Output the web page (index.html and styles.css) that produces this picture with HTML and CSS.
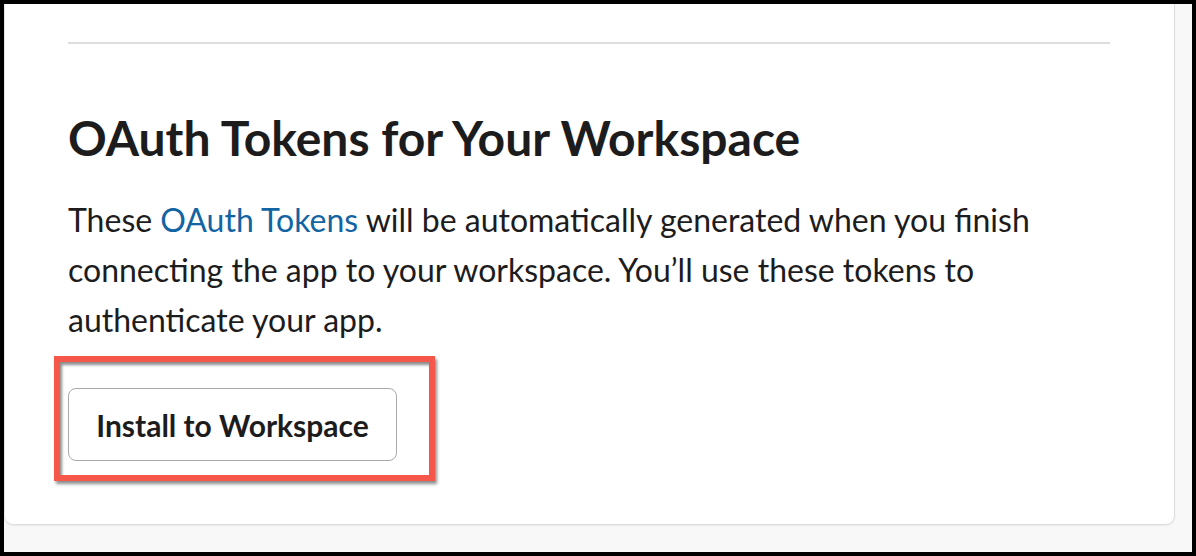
FILE: index.html
```html
<!DOCTYPE html>
<html lang="en">
<head>
  <meta charset="UTF-8">
  <title>OAuth Tokens</title>
  <link rel="stylesheet" href="styles.css">
</head>
<body>

  <div class="frame">
    <div class="card">
      <hr class="divider">

      <h2 class="title">OAuth Tokens for Your Workspace</h2>
      <p class="desc">
        These <a href="#" class="link">OAuth Tokens</a> will be automatically generated when you finish
        connecting the app to your workspace. You’ll use these tokens to
        authenticate your app.
      </p>

      <div class="install">
        <button class="install-btn">Install to Workspace</button>
        <span class="highlight"></span>
      </div>
    </div>
  </div>

</body>
</html>
```

FILE: styles.css
```css
html, body {
  margin: 0;
  padding: 0;
  background: #000;
}

body {
  font-family: Lato, "Noto Sans", sans-serif;
  color: #1d1c1d;
  height: 556px;
  overflow: hidden;
}

.frame {
  margin: 4px 4px 0 4px;
  height: 548px;
  background: #f8f8f8;
  padding-right: 17px;
  box-sizing: border-box;
}

.card {
  background: #fff;
  border: 1px solid #dddddd;
  border-top: none;
  border-left-color: #e6e6e6;
  border-radius: 0 0 9px 9px;
  box-shadow: 0 1px 2px rgba(0, 0, 0, 0.06);
  padding: 38px 64px 63px 63px;
}

.divider {
  border: none;
  height: 2px;
  background: #dddddd;
  margin: 0;
}

.title {
  font-size: 48px;
  font-weight: 700;
  line-height: 56px;
  margin: 66px 0 0;
}

.desc {
  font-size: 32px;
  line-height: 50px;
  margin: 29px 0 0;
}

.link {
  color: #1264a3;
  text-decoration: none;
}

.install {
  position: relative;
  margin-top: 43px;
  width: max-content;
}

.install-btn {
  font-family: Lato, "Noto Sans", sans-serif;
  font-size: 30px;
  font-weight: 700;
  color: #1d1c1d;
  background: #fff;
  border: 1px solid #a9a9a9;
  border-radius: 8px;
  width: 329px;
  height: 73px;
  padding: 0;
  display: block;
}

.highlight {
  position: absolute;
  left: -14px;
  top: -32px;
  width: 381px;
  height: 125px;
  box-sizing: border-box;
  border: 6px solid #f5584b;
  box-shadow: 2px 3px 3px rgba(0, 0, 0, 0.45), inset 2px 3px 3px rgba(0, 0, 0, 0.45);
  pointer-events: none;
}
```
